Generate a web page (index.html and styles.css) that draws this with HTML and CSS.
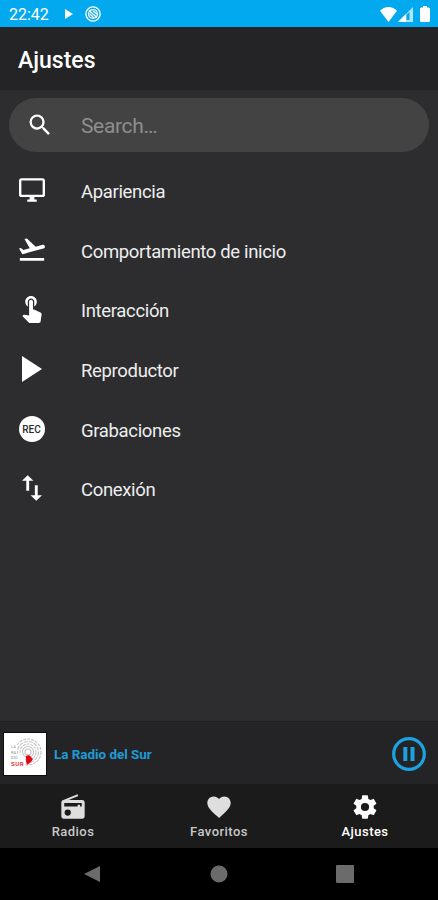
FILE: index.html
```html
<!DOCTYPE html>
<html lang="es">
<head>
    <meta charset="UTF-8">
    <meta name="viewport" content="width=device-width, initial-scale=1.0">
    <title>Ajustes</title>
    <link rel="stylesheet" href="styles.css">
</head>
<body>
    <div class="status-bar">
        <span class="clock">22:42</span>
        <svg class="status-play" viewBox="0 0 8 10"><path d="M0 0l8 5-8 5z"/></svg>
        <svg class="status-cast" viewBox="0 0 16 16">
            <circle cx="8" cy="8" r="7.1" fill="none" stroke="#fff" stroke-width="1.4"/>
            <circle cx="8" cy="8" r="4.4" fill="none" stroke="#fff" stroke-width="1.3"/>
            <path d="M4 4.5l8 7M5 8l4 4M8 5l4 3" stroke="#fff" stroke-width="1.3"/>
        </svg>
        <div class="status-right">
            <svg class="wifi" viewBox="0 0 17 15"><path d="M8.500 15L0 3.800C2.300 1.400 5.200 0 8.500 0S14.700 1.400 17 3.800z"/></svg>
            <svg class="signal" viewBox="0 0 15 15">
                <path d="M15 0v15H0z" opacity=".7"/>
                <path d="M0 15L8 7v8z"/>
                <path d="M8.500 7.500L11.500 5v8h-3z" fill="#03a9ee"/>
            </svg>
            <svg class="battery" viewBox="0 0 10 16"><path d="M3 0h4v1.500h1.500A1.500 1.500 0 0 1 10 3v11.500A1.500 1.500 0 0 1 8.500 16h-7A1.500 1.500 0 0 1 0 14.500V3a1.500 1.500 0 0 1 1.500-1.500H3z"/></svg>
        </div>
    </div>

    <header>
        <h1>Ajustes</h1>
    </header>

    <main>
        <div class="search">
            <svg viewBox="0 0 24 24"><path d="M15.500 14h-.79l-.28-.27A6.471 6.471 0 0 0 16 9.500 6.500 6.500 0 1 0 9.500 16c1.610 0 3.090-.59 4.230-1.570l.27.28v.79l5 4.990L20.490 19l-4.990-5zm-6 0C7.010 14 5 11.990 5 9.500S7.010 5 9.500 5 14 7.010 14 9.500 11.990 14 9.500 14z"/></svg>
            <span>Search…</span>
        </div>

        <ul class="menu">
            <li>
                <span class="slot"><svg class="ic-screen" viewBox="1 2 22 20"><path d="M21 2H3c-1.100 0-2 .9-2 2v12c0 1.100.9 2 2 2h7v2H8v2h8v-2h-2v-2h7c1.100 0 2-.9 2-2V4c0-1.100-.9-2-2-2zm0 14H3V4h18v12z"/></svg></span>
                <span class="label">Apariencia</span>
            </li>
            <li>
                <span class="slot"><svg class="ic-takeoff" viewBox="1.800 3.500 20.400 17.500"><path d="M2.500 19h19v2h-19zM22.070 9.640c-.21-.8-1.040-1.280-1.840-1.060L14.920 10l-6.900-6.430-1.930.51 4.140 7.170-4.970 1.330-1.970-1.540-1.450.39 1.820 3.160.77 1.330 1.600-.43 5.310-1.420 4.350-1.160L21 11.490c.81-.23 1.280-1.050 1.070-1.850z"/></svg></span>
                <span class="label">Comportamiento de inicio</span>
            </li>
            <li>
                <span class="slot"><svg class="ic-touch" viewBox="4.700 3 15.100 21"><path d="M9 11.240V7.500C9 6.120 10.120 5 11.500 5S14 6.120 14 7.500v3.740c1.210-.81 2-2.180 2-3.740C16 5.010 13.990 3 11.500 3S7 5.010 7 7.500c0 1.560.79 2.930 2 3.740zM18.840 15.870l-4.540-2.260c-.17-.07-.35-.11-.54-.11H13v-6c0-.83-.67-1.500-1.500-1.500S10 6.670 10 7.500v10.740l-3.430-.72c-.08-.01-.15-.03-.24-.03-.31 0-.59.13-.79.33l-.79.8 4.940 4.940c.27.27.65.44 1.060.44h6.790c.75 0 1.330-.55 1.440-1.280l.75-5.270c.01-.07.02-.14.02-.2 0-.62-.38-1.160-.91-1.380z"/></svg></span>
                <span class="label">Interacción</span>
            </li>
            <li>
                <span class="slot"><svg class="ic-play" viewBox="0 0 20 26"><path d="M0 0l20 13L0 26z"/></svg></span>
                <span class="label">Reproductor</span>
            </li>
            <li>
                <span class="slot"><span class="ic-rec">REC</span></span>
                <span class="label">Grabaciones</span>
            </li>
            <li>
                <span class="slot"><svg class="ic-swap" viewBox="5 3 14 18"><path d="M9 3L5 6.990h3V14h2V6.990h3L9 3zM16 17.010V10h-2v7.010h-3L15 21l4-3.990h-3z"/></svg></span>
                <span class="label">Conexión</span>
            </li>
        </ul>
    </main>

    <div class="player">
        <svg class="cover" viewBox="0 0 42 42">
            <rect width="42" height="42" fill="#fff"/>
            <g fill="none" stroke="#c2c2c2" stroke-width="1.100">
                <circle cx="24" cy="19" r="13" stroke-dasharray="3 1"/>
                <circle cx="24" cy="19" r="10.500" stroke-dasharray="4 1"/>
                <circle cx="24" cy="19" r="8" stroke-dasharray="3 1"/>
                <circle cx="24" cy="19" r="5.500"/>
                <circle cx="24" cy="19" r="3"/>
            </g>
            <path d="M7 12h6v14H7zM12 20l6 2 4 6-1 6H8z" fill="#fff"/>
            <text class="cover-small" x="7" y="15">LA</text>
            <text class="cover-small" x="7" y="20.500">RA</text>
            <text class="cover-small" x="7" y="26">DIO</text>
            <text class="cover-sur" x="7" y="33">SUR</text>
            <path d="M22 23l3-1 4 4-2 3-4 3-1-4z" fill="#e30613"/>
        </svg>
        <span class="track">La Radio del Sur</span>
        <svg class="pause" viewBox="0 0 34 34">
            <circle cx="17" cy="17" r="15.300" fill="none" stroke="#1aa3e0" stroke-width="3.200"/>
            <path d="M11.300 10h4v14h-4zM18.500 10h4v14h-4z" fill="#1aa3e0"/>
        </svg>
    </div>

    <nav>
        <a href="#">
            <svg viewBox="0 0 24 24"><path fill-rule="evenodd" d="M3.240 6.150C2.510 6.430 2 7.170 2 8v12c0 1.100.89 2 2 2h16c1.110 0 2-.9 2-2V8c0-1.110-.89-2-2-2H8.300l8.260-3.340L15.880 1 3.240 6.150zM7.500 19.500a2.700 2.700 0 1 1 0-5.400 2.700 2.700 0 0 1 0 5.400zM19.500 11.500h-1.500v-1.500h-2v1.500H4.500V8.500h15v3z"/></svg>
            <span>Radios</span>
        </a>
        <a href="#">
            <svg viewBox="0 0 24 24"><path d="M12 21.350l-1.450-1.320C5.400 15.360 2 12.280 2 8.500 2 5.420 4.420 3 7.500 3c1.740 0 3.410.81 4.500 2.090C13.090 3.810 14.760 3 16.500 3 19.580 3 22 5.420 22 8.500c0 3.780-3.400 6.860-8.550 11.540L12 21.350z"/></svg>
            <span>Favoritos</span>
        </a>
        <a href="#" class="active">
            <svg viewBox="0 0 24 24"><path d="M12 15.500A3.500 3.500 0 0 1 8.500 12 3.500 3.500 0 0 1 12 8.500a3.500 3.500 0 0 1 3.500 3.500 3.500 3.500 0 0 1-3.500 3.500m7.430-2.530c.04-.32.07-.64.07-.97s-.03-.66-.07-1l2.110-1.630c.19-.15.24-.42.12-.64l-2-3.460c-.12-.22-.39-.31-.61-.22l-2.490 1c-.52-.39-1.060-.73-1.690-.98l-.37-2.650A.506.506 0 0 0 14 2h-4c-.25 0-.46.18-.5.42l-.37 2.650c-.63.25-1.170.59-1.690.98l-2.490-1c-.22-.09-.49 0-.61.22l-2 3.460c-.13.22-.07.49.12.64L4.570 11c-.04.34-.07.67-.07 1s.03.65.07.97l-2.110 1.660c-.19.15-.25.42-.12.64l2 3.460c.12.22.39.3.61.22l2.490-1.010c.52.4 1.060.74 1.690.99l.37 2.650c.04.24.25.42.5.42h4c.25 0 .46-.18.5-.42l.37-2.650c.63-.26 1.170-.59 1.690-.99l2.490 1.010c.22.08.49 0 .61-.22l2-3.460c.12-.22.07-.49-.12-.64l-2.110-1.660z"/></svg>
            <span>Ajustes</span>
        </a>
    </nav>

    <div class="system-bar">
        <svg viewBox="0 0 18 18"><path d="M17 1v16L1 9z"/></svg>
        <svg viewBox="0 0 18 18"><circle cx="9" cy="9" r="8.500"/></svg>
        <svg viewBox="0 0 18 18"><rect width="18" height="18" rx="1"/></svg>
    </div>
</body>
</html>
```
FILE: styles.css
```css
* {
    margin: 0;
    padding: 0;
    box-sizing: border-box;
}

body {
    display: flex;
    flex-direction: column;
    height: 900px;
    overflow: hidden;
    font-family: Roboto, sans-serif;
    background-color: #2d2d2f;
    color: #eeeeee;
}

svg {
    display: block;
    flex: none;
    fill: #ffffff;
}

/* Android status bar */
.status-bar {
    display: flex;
    align-items: center;
    height: 27px;
    padding: 1px 8px 0 9px;
    background-color: #03a9ee;
    color: #ffffff;
}

.clock {
    width: 56px;
    font-size: 16px;
}

.status-play {
    width: 8px;
    height: 10px;
}

.status-cast {
    width: 16px;
    height: 16px;
    margin-left: 12px;
}

.status-right {
    display: flex;
    align-items: center;
    margin-left: auto;
}

.wifi {
    width: 17px;
    height: 15px;
}

.signal {
    width: 15px;
    height: 15px;
    margin-left: 1px;
}

.battery {
    width: 10px;
    height: 16px;
    margin-left: 7px;
}

header {
    height: 63px;
    padding-left: 18px;
    background-color: #242426;
}

header h1 {
    font-size: 23px;
    font-weight: 500;
    line-height: 67px;
    color: #ffffff;
}

main {
    flex: 1;
    padding-top: 8px;
}

.search {
    display: flex;
    align-items: center;
    height: 54px;
    margin: 0 9px;
    padding-left: 17px;
    border-radius: 27px;
    background-color: #434343;
    font-size: 21px;
    letter-spacing: -0.35px;
    color: #8e8e8e;
}

.search svg {
    width: 28px;
    height: 28px;
    margin-right: 27px;
}

.search span {
    padding-top: 2px;
}

/* Settings list */
.menu {
    margin-top: 10px;
    list-style: none;
}

.menu li {
    display: flex;
    align-items: center;
    height: 59.6px;
}

.slot {
    display: flex;
    justify-content: center;
    width: 63px;
    margin: 0 18px 3px 0;
}

.label {
    padding-top: 1px;
    font-size: 18.5px;
    letter-spacing: -0.34px;
}

.ic-screen {
    width: 26px;
    height: 24px;
}

.ic-takeoff {
    width: 26px;
    height: 23px;
}

.ic-touch {
    width: 20px;
    height: 27px;
}

.ic-play {
    width: 20px;
    height: 26px;
}

.ic-rec {
    width: 26px;
    height: 26px;
    border-radius: 50%;
    background-color: #ffffff;
    color: #2d2d2f;
    font-size: 10px;
    font-weight: 500;
    line-height: 27px;
    text-align: center;
}

.ic-swap {
    width: 20px;
    height: 26px;
}

/* Now playing */
.player {
    display: flex;
    align-items: center;
    height: 63px;
    padding: 1px 12px 0 4px;
    border-top: 1px solid #1e1e20;
    background-color: #242426;
}

.cover {
    width: 42px;
    height: 42px;
    outline: 1px solid #0c0c0c;
}

.cover-small {
    font-size: 4px;
    fill: #909090;
}

.cover-sur {
    font-size: 6px;
    font-weight: 700;
    letter-spacing: 0.6px;
    fill: #e3303a;
}

.track {
    margin-left: 8px;
    padding-top: 1px;
    font-size: 13.4px;
    font-weight: 700;
    color: #1e9cd7;
}

.pause {
    width: 34px;
    height: 34px;
    margin-left: auto;
}

nav {
    display: flex;
    height: 64px;
    background-color: #1b1b1b;
}

nav a {
    display: flex;
    flex: 1;
    flex-direction: column;
    align-items: center;
    padding-top: 9px;
    font-size: 13px;
    font-weight: 500;
    color: #c8c8c8;
    text-decoration: none;
}

nav svg {
    width: 28px;
    height: 28px;
    fill: #dedede;
}

nav span {
    margin-top: 3px;
    letter-spacing: 0.45px;
}

nav .active {
    color: #ffffff;
}

nav .active svg {
    fill: #ffffff;
}

.system-bar {
    display: flex;
    justify-content: space-between;
    height: 52px;
    padding: 17px 84px 0 83px;
    background-color: #000000;
}

.system-bar svg {
    width: 18px;
    height: 18px;
    fill: #6b6b6b;
}
```
